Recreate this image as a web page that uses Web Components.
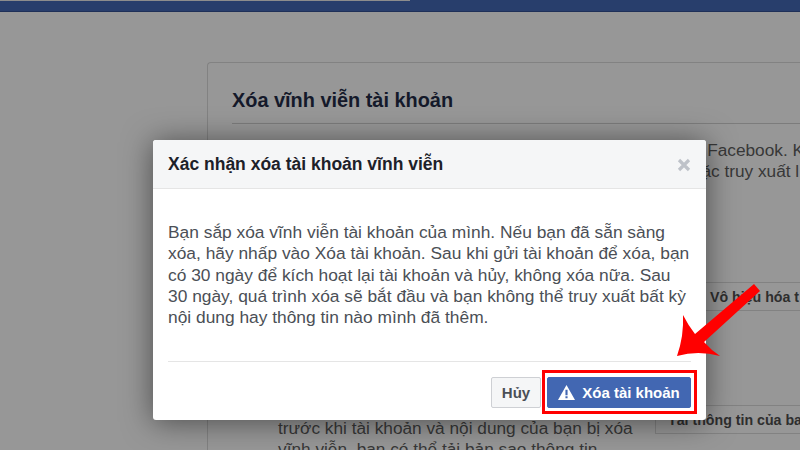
<!DOCTYPE html>
<html lang="vi">
<head>
<meta charset="utf-8">
<title>Xóa tài khoản</title>
<style>
  html, body { margin: 0; height: 100%; }
  body {
    width: 800px;
    height: 450px;
    overflow: hidden;
    position: relative;
    background: #979797;
    font-family: "Liberation Sans", Arial, sans-serif;
  }
</style>
</head>
<body>
<fb-topbar></fb-topbar>
<settings-card></settings-card>
<confirm-dialog heading="Xác nhận xóa tài khoản vĩnh viễn">
  Bạn sắp xóa vĩnh viễn tài khoản của mình. Nếu bạn đã sẵn sàng xóa, hãy nhấp vào Xóa tài khoản. Sau khi gửi tài khoản để xóa, bạn có 30 ngày để kích hoạt lại tài khoản và hủy, không xóa nữa. Sau 30 ngày, quá trình xóa sẽ bắt đầu và bạn không thể truy xuất bất kỳ nội dung hay thông tin nào mình đã thêm.
</confirm-dialog>
<red-arrow></red-arrow>

<script>
class FbTopbar extends HTMLElement {
  constructor() {
    super();
    this.attachShadow({ mode: "open" }).innerHTML = `
      <style>
        :host { display: block; height: 12px; background: #283e6c; border-bottom: 1px solid #1f3058; box-sizing: border-box; }
        .search { width: 410px; height: 1px; background: #8d8d8d; }
      </style>
      <div class="search"></div>
    `;
  }
}

class SettingsCard extends HTMLElement {
  constructor() {
    super();
    this.attachShadow({ mode: "open" }).innerHTML = `
      <style>
        :host {
          display: block;
          box-sizing: border-box;
          width: 593px;
          height: 388px;
          margin: 50px 0 0 207px;
          padding: 0 0 0 24px;
          border: 1px solid #828282;
          border-width: 1px 0 0 1px;
          border-radius: 4px 0 0 0;
          overflow: hidden;
          color: #383838;
          font-size: 17.25px;
          line-height: 21px;
        }
        h2 {
          margin: 0;
          padding: 25px 0 11px;
          font-size: 19.9px;
          line-height: 24px;
          font-weight: bold;
          color: #14192a;
          border-bottom: 1px solid #7c7c7c;
        }
        .intro { margin: 0 -4px 0 0; padding-top: 16px; white-space: nowrap; text-align: right; }
        .actions { padding: 100px 0 0 46px; display: grid; grid-template-columns: 377px 1fr; }
        .btn {
          box-sizing: border-box;
          height: 29px;
          padding: 4px 0 0 12px;
          border: 1px solid #828282;
          border-right: 0;
          font-weight: bold;
          font-size: 14.2px;
          white-space: nowrap;
          overflow: hidden;
          color: #2e2e2e;
        }
        .btn.off { padding-left: 54px; }
        .gap { height: 94px; }
        p.last { margin: 0; padding-top: 13px; white-space: nowrap; }
      </style>
      <h2>Xóa vĩnh viễn tài khoản</h2>
      <p class="intro">Nếu bạn chỉ muốn tạm nghỉ, hãy vô hiệu hóa tài khoản Facebook. K<br>Bạn sẽ không thể kích hoạt lại hoặc truy xuất l&nbsp;</p>
      <div class="actions">
        <div></div>
        <div class="btn off">Vô hiệu hóa t</div>
        <div class="gap"></div><div class="gap"></div>
        <p class="last">trước khi tài khoản và nội dung của bạn bị xóa<br>vĩnh viễn, bạn có thể tải bản sao thông tin</p>
        <div class="btn">Tải thông tin của ba</div>
      </div>
    `;
  }
}

class ConfirmDialog extends HTMLElement {
  constructor() {
    super();
    this.attachShadow({ mode: "open" }).innerHTML = `
      <style>
        :host {
          position: absolute;
          left: 153px;
          top: 140px;
          width: 553px;
          height: 280px;
          display: flex;
          flex-direction: column;
          background: #fff;
          border-radius: 3px;
          box-shadow: 0 2px 30px rgba(0,0,0,.5);
          color: #1d2129;
        }
        header {
          height: 49px;
          box-sizing: border-box;
          padding: 0 15px;
          display: flex;
          align-items: center;
          justify-content: space-between;
          background: #f5f6f7;
          border-bottom: 1px solid #e5e5e5;
          border-radius: 3px 3px 0 0;
        }
        h3 { margin: 0; font-size: 17.5px; font-weight: bold; color: #1d2129; }
        svg.close { display: block; margin-top: 2px; }
        .body {
          flex: 1;
          margin: 0 15px;
          padding: 33px 0 0;
          font-size: 17.38px;
          line-height: 21.3px;
          color: #4b4f56;
          border-bottom: 1px solid #e5e5e5;
        }
        footer {
          height: 58px;
          box-sizing: border-box;
          padding: 15px 15px 0 0;
          display: flex;
          align-items: flex-start;
          justify-content: flex-end;
          gap: 6px;
        }
        .outline {
          position: relative;
        }
        .outline::after {
          content: "";
          position: absolute;
          left: -5px; right: -6px; top: -7px; bottom: -6px;
          border: 3px solid #f00;
        }
        button {
          height: 31px;
          box-sizing: border-box;
          font: bold 15px "Liberation Sans", Arial, sans-serif;
          border-radius: 2px;
          display: flex;
          align-items: center;
        }
        .cancel { width: 50px; justify-content: center; background: #f5f6f7; border: 1px solid #ced0d4; color: #4b4f56; padding: 0; }
        .danger { width: 144px; justify-content: center; gap: 7px; background: #4267b2; border: 1px solid #4267b2; color: #fff; padding: 0; }
      </style>
      <header>
        <h3></h3>
        <svg class="close" width="14" height="14" viewBox="0 0 14 14"><path d="M2 2 12 12M12 2 2 12" stroke="#bec2c9" stroke-width="3.2"/></svg>
      </header>
      <div class="body"><slot></slot></div>
      <footer>
        <button class="cancel">Hủy</button>
        <div class="outline">
          <button class="danger">
            <svg width="17" height="15" viewBox="0 0 16 14"><path fill-rule="evenodd" fill="#fff" d="M8 0 16 14H0ZM7 4.5V9.5H9V4.5ZM7 10.5V12.5H9V10.5Z"/></svg>
            Xóa tài khoản
          </button>
        </div>
      </footer>
    `;
    this.shadowRoot.querySelector("h3").textContent = this.getAttribute("heading");
  }
}

class RedArrow extends HTMLElement {
  constructor() {
    super();
    this.attachShadow({ mode: "open" }).innerHTML = `
      <style>
        :host { position: absolute; left: 670px; top: 280px; width: 95px; height: 82px; pointer-events: none; }
        svg { display: block; }
      </style>
      <svg width="95" height="82" viewBox="670 280 95 82">
        <path fill="#f00" d="M754 284 760 291 704 342Q711 350 720 356Q698 350 677 356Q684 336 683 315Q688 325 695 334Z"/>
      </svg>
    `;
  }
}

customElements.define("fb-topbar", FbTopbar);
customElements.define("settings-card", SettingsCard);
customElements.define("confirm-dialog", ConfirmDialog);
customElements.define("red-arrow", RedArrow);
</script>
</body>
</html>
